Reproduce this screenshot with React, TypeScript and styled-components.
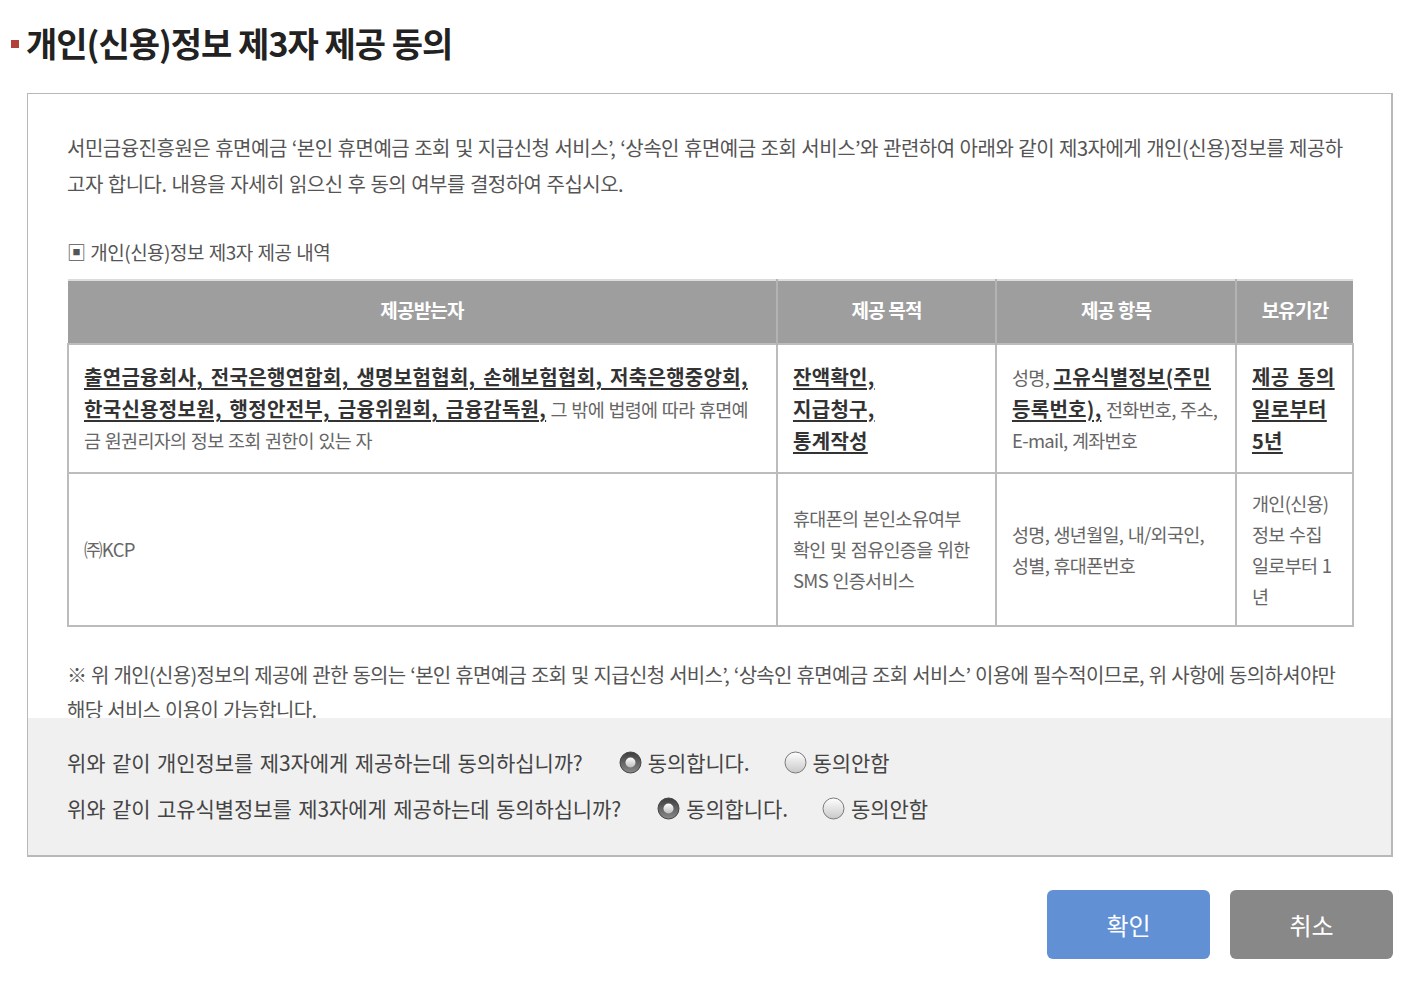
import styled, { createGlobalStyle } from "styled-components";

const GlobalStyle = createGlobalStyle`
  body {
    margin: 0;
    background: #fff;
    font-family: "Noto Sans CJK KR", "Noto Sans", sans-serif;
    color: #555;
  }
`;

const Page = styled.div`
  width: 1414px;
  height: 991px;
  box-sizing: border-box;
  padding: 22px 21px 0 11px;
`;

const Title = styled.h1`
  display: flex;
  align-items: center;
  gap: 7px;
  margin: 0 0 29px;
  font-size: 34px;
  line-height: 42px;
  font-weight: 700;
  letter-spacing: -1px;
  color: #222;
`;

const Bullet = styled.span`
  width: 8px;
  height: 8px;
  background: #b0413b;
  margin-top: 2px;
`;

const Box = styled.div`
  margin-left: 16px;
  border: 1px solid #b8b8b8;
  border-right-width: 2px;
  border-bottom-width: 2px;
`;

const ScrollArea = styled.div`
  height: 624px;
  overflow: hidden;
  box-sizing: border-box;
  padding: 36px 39px 0 39px;
`;

const Para = styled.p`
  margin: 0;
  font-size: 20px;
  line-height: 36px;
  letter-spacing: -0.5px;
  word-spacing: 1px;
  color: #555;
  word-break: break-all;
`;

const SubHead = styled(Para)`
  margin-top: 32px;
  font-size: 19px;
`;

const Table = styled.table`
  width: 1285px;
  margin-top: 9px;
  border-collapse: collapse;
  table-layout: fixed;
  border-top: 2px solid #dcdcdc;
`;

const Th = styled.th`
  height: 57px;
  padding: 0 0 5px;
  background: #9e9e9e;
  color: #fff;
  font-size: 19px;
  font-weight: 700;
  letter-spacing: -0.8px;
  border-left: 2px solid #b3b3b3;
  &:first-child {
    border-left: none;
  }
`;

const Td = styled.td<{ $h?: number }>`
  height: ${(p) => p.$h ?? 120}px;
  padding: 0 15px;
  border: 2px solid #bcbcbc;
  font-size: 18.5px;
  line-height: 31px;
  letter-spacing: -0.7px;
  word-spacing: 1px;
  color: #666;
  vertical-align: middle;
  word-break: break-all;
`;

const Strong = styled.u`
  font-size: 20px;
  font-weight: 700;
  letter-spacing: 0.3px;
  word-spacing: 3px;
  color: #333;
  text-underline-offset: 3px;
`;

const Note = styled(Para)`
  margin-top: 30px;
  line-height: 35px;
  letter-spacing: -0.7px;
`;

const AgreeArea = styled.div`
  background: #f0f0f0;
  padding: 21px 39px 24px;
  display: flex;
  flex-direction: column;
`;

const AgreeRow = styled.div`
  display: flex;
  align-items: center;
  height: 46px;
  font-size: 21px;
  letter-spacing: -0.1px;
  word-spacing: 2px;
  color: #444;
`;

const Question = styled.span`
  margin-right: 36px;
`;

const Option = styled.label`
  display: flex;
  align-items: center;
  gap: 6px;
  margin-right: 34px;
`;

const Buttons = styled.div`
  display: flex;
  justify-content: flex-end;
  gap: 20px;
  margin-top: 33px;
`;

const Button = styled.button<{ $tone: "blue" | "gray" }>`
  width: 163px;
  height: 69px;
  border: none;
  border-radius: 6px;
  background: ${(p) => (p.$tone === "blue" ? "#6290d4" : "#888888")};
  color: #fff;
  font-family: "Noto Sans CJK KR", sans-serif;
  font-size: 24px;
  font-weight: 400;
`;

const Radio = ({ checked }: { checked?: boolean }) => (
  <svg width="23" height="23" viewBox="0 0 23 23">
    <defs>
      <linearGradient id="rOn" x1="0" y1="0" x2="0" y2="1">
        <stop offset="0" stopColor="#3d3d3d" />
        <stop offset="1" stopColor="#8a8a8a" />
      </linearGradient>
      <linearGradient id="rDot" x1="0" y1="0" x2="0" y2="1">
        <stop offset="0" stopColor="#ffffff" />
        <stop offset="1" stopColor="#bdbdbd" />
      </linearGradient>
      <linearGradient id="rOff" x1="0" y1="0" x2="0" y2="1">
        <stop offset="0" stopColor="#ffffff" />
        <stop offset="1" stopColor="#c8c8c8" />
      </linearGradient>
    </defs>
    {checked ? (
      <>
        <circle cx="11.5" cy="11.5" r="10.5" fill="url(#rOn)" stroke="#444" />
        <circle cx="11.5" cy="11.5" r="5" fill="url(#rDot)" />
      </>
    ) : (
      <circle cx="11.5" cy="11.5" r="10.5" fill="url(#rOff)" stroke="#7a7a7a" />
    )}
  </svg>
);

const AgreeLine = ({ question }: { question: string }) => (
  <AgreeRow>
    <Question>{question}</Question>
    <Option>
      <Radio checked />
      동의합니다.
    </Option>
    <Option>
      <Radio />
      동의안함
    </Option>
  </AgreeRow>
);

export default function App() {
  return (
    <>
      <GlobalStyle />
      <Page>
        <Title>
          <Bullet />
          개인(신용)정보 제3자 제공 동의
        </Title>
        <Box>
          <ScrollArea>
            <Para>
              서민금융진흥원은 휴면예금 ‘본인 휴면예금 조회 및 지급신청 서비스’, ‘상속인 휴면예금 조회 서비스’와 관련하여 아래와 같이 제3자에게 개인(신용)정보를 제공하고자 합니다. 내용을 자세히 읽으신 후 동의 여부를 결정하여 주십시오.
            </Para>
            <SubHead>▣ 개인(신용)정보 제3자 제공 내역</SubHead>
            <Table>
              <colgroup>
                <col style={{ width: 709 }} />
                <col style={{ width: 219 }} />
                <col style={{ width: 240 }} />
                <col style={{ width: 117 }} />
              </colgroup>
              <thead>
                <tr>
                  <Th>제공받는자</Th>
                  <Th>제공 목적</Th>
                  <Th>제공 항목</Th>
                  <Th>보유기간</Th>
                </tr>
              </thead>
              <tbody>
                <tr>
                  <Td $h={127}>
                    <Strong>
                      출연금융회사, 전국은행연합회, 생명보험협회, 손해보험협회, 저축은행중앙회, 한국신용정보원, 행정안전부, 금융위원회, 금융감독원,
                    </Strong>{" "}
                    그 밖에 법령에 따라 휴면예금 원권리자의 정보 조회 권한이 있는 자
                  </Td>
                  <Td $h={127}>
                    <Strong>
                      잔액확인,
                      <br />
                      지급청구,
                      <br />
                      통계작성
                    </Strong>
                  </Td>
                  <Td $h={127}>
                    성명, <Strong>고유식별정보(주민등록번호),</Strong> 전화번호, 주소, E-mail, 계좌번호
                  </Td>
                  <Td $h={127}>
                    <Strong>제공 동의 일로부터 5년</Strong>
                  </Td>
                </tr>
                <tr>
                  <Td $h={151}>㈜KCP</Td>
                  <Td $h={151}>
                    휴대폰의 본인소유여부 확인 및 점유인증을 위한 SMS 인증서비스
                  </Td>
                  <Td $h={151}>성명, 생년월일, 내/외국인, 성별, 휴대폰번호</Td>
                  <Td $h={151}>개인(신용) 정보 수집 일로부터 1년</Td>
                </tr>
              </tbody>
            </Table>
            <Note>
              ※ 위 개인(신용)정보의 제공에 관한 동의는 ‘본인 휴면예금 조회 및 지급신청 서비스’, ‘상속인 휴면예금 조회 서비스’ 이용에 필수적이므로, 위 사항에 동의하셔야만 해당 서비스 이용이 가능합니다.
            </Note>
          </ScrollArea>
          <AgreeArea>
            <AgreeLine question="위와 같이 개인정보를 제3자에게 제공하는데 동의하십니까?" />
            <AgreeLine question="위와 같이 고유식별정보를 제3자에게 제공하는데 동의하십니까?" />
          </AgreeArea>
        </Box>
        <Buttons>
          <Button $tone="blue">확인</Button>
          <Button $tone="gray">취소</Button>
        </Buttons>
      </Page>
    </>
  );
}
